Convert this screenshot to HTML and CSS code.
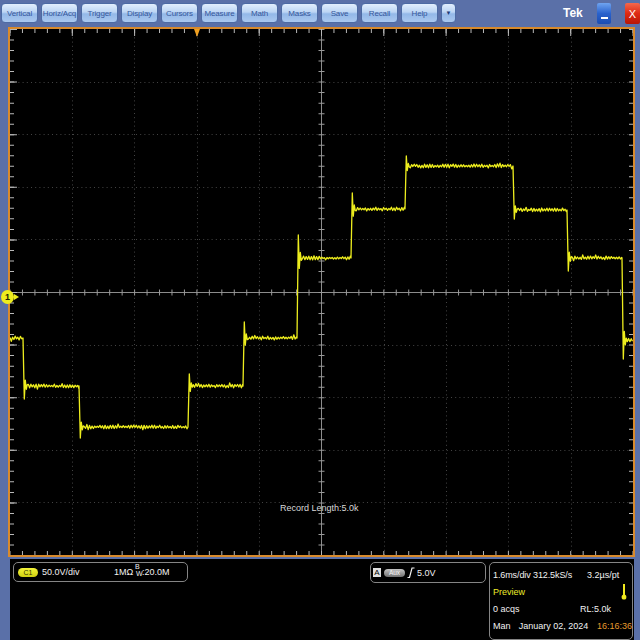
FILE: index.html
```html
<!DOCTYPE html>
<html>
<head>
<meta charset="utf-8">
<title>Tek Scope</title>
<link rel="stylesheet" href="styles.css">
</head>
<body>
<div class="menubar">
  <div class="mb">Vertical</div>
  <div class="mb">Horiz/Acq</div>
  <div class="mb">Trigger</div>
  <div class="mb">Display</div>
  <div class="mb">Cursors</div>
  <div class="mb">Measure</div>
  <div class="mb">Math</div>
  <div class="mb">Masks</div>
  <div class="mb">Save</div>
  <div class="mb">Recall</div>
  <div class="mb">Help</div>
  <div class="mb mb-arrow">&#9660;</div>
  <span class="tek">Tek</span>
  <span class="winbtn win-min"><span class="min-bar"></span></span>
  <span class="winbtn win-close">X</span>
</div>

<div class="screen">
  <svg class="grat" width="623" height="526" viewBox="10 29 623 526" xmlns="http://www.w3.org/2000/svg">
    <g class="dots" stroke="#444444" stroke-width="1" stroke-dasharray="1 3.2">
      <line x1="72.5" y1="29" x2="72.5" y2="555"/>
      <line x1="134.5" y1="29" x2="134.5" y2="555"/>
      <line x1="197.5" y1="29" x2="197.5" y2="555"/>
      <line x1="259.5" y1="29" x2="259.5" y2="555"/>
      <line x1="384.5" y1="29" x2="384.5" y2="555"/>
      <line x1="446.5" y1="29" x2="446.5" y2="555"/>
      <line x1="508.5" y1="29" x2="508.5" y2="555"/>
      <line x1="571.5" y1="29" x2="571.5" y2="555"/>
      <line x1="10" y1="82.5" x2="633" y2="82.5"/>
      <line x1="10" y1="134.5" x2="633" y2="134.5"/>
      <line x1="10" y1="187.5" x2="633" y2="187.5"/>
      <line x1="10" y1="239.5" x2="633" y2="239.5"/>
      <line x1="10" y1="345.5" x2="633" y2="345.5"/>
      <line x1="10" y1="397.5" x2="633" y2="397.5"/>
      <line x1="10" y1="450.5" x2="633" y2="450.5"/>
      <line x1="10" y1="502.5" x2="633" y2="502.5"/>
    </g>
    <g stroke="#8c8c8c" stroke-width="1">
      <line x1="321.5" y1="29" x2="321.5" y2="555"/>
      <line x1="10" y1="292.5" x2="633" y2="292.5"/>
    </g>
    <g stroke="#9a9a9a">
      <line x1="9.5" y1="292.5" x2="633" y2="292.5" stroke-width="6" stroke-dasharray="1 11.46"/>
      <line x1="321.5" y1="29" x2="321.5" y2="555" stroke-width="6" stroke-dasharray="1 9.52"/>
    </g>
    <g stroke="#b8b8b8">
      <line x1="9.5" y1="29" x2="633" y2="29" stroke-width="8" stroke-dasharray="1 11.46"/>
      <line x1="9.5" y1="555" x2="633" y2="555" stroke-width="8" stroke-dasharray="1 11.46"/>
      <line x1="10" y1="29" x2="10" y2="555" stroke-width="8" stroke-dasharray="1 9.52"/>
      <line x1="633" y1="29" x2="633" y2="555" stroke-width="8" stroke-dasharray="1 9.52"/>
      <line x1="9.5" y1="29" x2="633" y2="29" stroke-width="14" stroke-dasharray="1 61.3"/>
      <line x1="10" y1="29" x2="10" y2="555" stroke-width="14" stroke-dasharray="1 51.6"/>
    </g>
    <path id="trace" d="" fill="none" stroke="#eded1e" stroke-width="1.3" stroke-linejoin="round"/>
  </svg>
  <div class="trig-marker"></div>
  <div class="ch-marker"><span class="ch-dot">1</span><span class="ch-arrow"></span></div>
  <div class="reclen">Record Length:5.0k</div>
</div>

<div class="status">
  <div class="box chbox">
    <span class="c1badge">C1</span>
    <span class="vdiv">50.0V/div</span>
    <span class="imp">1M&Omega;</span>
    <span class="bw"><span class="bw-b">B</span><span class="bw-w">W</span>:20.0M</span>
  </div>
  <div class="box trigbox">
    <span class="trig-a">A</span>
    <span class="aux">Aux</span>
    <svg class="edge" width="8" height="11" viewBox="0 0 8 11"><path d="M0.5 10.5 H2.5 L5 1 H7.5" fill="none" stroke="#f0f0f0" stroke-width="1.2"/></svg>
    <span class="tlevel">5.0V</span>
  </div>
  <div class="box tbbox">
    <div class="row"><span class="c-a">1.6ms/div</span><span class="c-b">312.5kS/s</span><span class="c-c">3.2&micro;s/pt</span></div>
    <div class="row"><span class="preview">Preview</span>
      <svg class="ind" width="6" height="16" viewBox="0 0 6 16"><rect x="2" y="0" width="2" height="12" fill="#f0e81e"/><ellipse cx="3" cy="13" rx="2.4" ry="2.6" fill="#f0e81e"/></svg>
    </div>
    <div class="row"><span class="c-acq">0 acqs</span><span class="c-rl">RL:5.0k</span></div>
    <div class="row"><span class="c-man">Man</span><span class="c-date">January 02, 2024</span><span class="c-time">16:16:36</span></div>
  </div>
</div>
<script src="script.js"></script>
</body>
</html>
```

FILE: styles.css
```css
* { box-sizing: border-box; margin: 0; padding: 0; }
html, body { width: 640px; height: 640px; overflow: hidden; }
body {
  background: #5a70a8;
  font-family: "Liberation Sans", Arial, sans-serif;
  color: #f2f2f2;
}

/* top menu */
.menubar {
  display: flex;
  align-items: flex-start;
  height: 27px;
  padding: 3px 0 0 1px;
}
.mb {
  width: 37px;
  height: 20px;
  margin-right: 3px;
  border-radius: 4px;
  border: 1px solid #4d6ba4;
  background: linear-gradient(#e2eefd 0%, #bcd5f4 45%, #93b8e8 55%, #aac8ef 100%);
  color: #35569a;
  font-size: 8px;
  letter-spacing: -0.15px;
  display: flex;
  align-items: center;
  justify-content: center;
  white-space: nowrap;
}
.mb-arrow { width: 15px; font-size: 6px; color: #1e3a78; letter-spacing: 0; }
.tek {
  margin-left: auto;
  width: 20px;
  margin-right: 14px;
  margin-top: 3px;
  font-size: 12px;
  font-weight: bold;
  color: #ffffff;
}
.winbtn {
  height: 21px;
  border-radius: 2px;
  display: flex;
  align-items: center;
  justify-content: center;
}
.win-min {
  width: 14px;
  margin-right: 14px;
  background: linear-gradient(#6fa4f0, #2a62cc 50%, #1a4cb2);
  align-items: flex-end;
  padding-bottom: 5px;
}
.min-bar { width: 7px; height: 2px; background: #ffffff; }
.win-close {
  width: 15px;
  background: linear-gradient(#f4684c, #de2a14 50%, #b81606);
  color: #ffffff;
  font-size: 11px;
}

/* graticule */
.screen {
  position: relative;
  margin-left: 8px;
  width: 627px;
  height: 530px;
  border: 2px solid #d88a2c;
  background: #000000;
}
.grat { display: block; }
.trig-marker {
  position: absolute;
  left: 184px;
  top: 0;
  width: 0;
  height: 0;
  border-left: 3.5px solid transparent;
  border-right: 3.5px solid transparent;
  border-top: 8px solid #f0a020;
}
.ch-marker {
  position: absolute;
  left: -9px;
  top: 261px;
  display: flex;
  align-items: center;
}
.ch-dot {
  width: 13px;
  height: 14px;
  border-radius: 50%;
  background: #ecec1e;
  color: #202000;
  font-size: 9px;
  font-weight: bold;
  display: flex;
  align-items: center;
  justify-content: center;
}
.ch-arrow {
  width: 0;
  height: 0;
  border-top: 3px solid transparent;
  border-bottom: 3px solid transparent;
  border-left: 5px solid #ecec1e;
}
.reclen {
  position: absolute;
  left: 270px;
  top: 474px;
  font-size: 9px;
  line-height: 11px;
  color: #d8d8d8;
}

/* bottom status */
.status {
  display: flex;
  align-items: flex-start;
  margin: 2px 0 0 10px;
  width: 624px;
  height: 81px;
  background: #000000;
  padding-top: 3px;
  font-size: 9px;
}
.box {
  border: 1px solid #858585;
  border-radius: 5px;
}
.chbox {
  margin-left: 3px;
  width: 175px;
  height: 20px;
  display: flex;
  align-items: center;
  padding-left: 4px;
}
.c1badge {
  width: 20px;
  height: 9px;
  border-radius: 5px;
  background: linear-gradient(#f4f43a, #cfcf10);
  color: #333300;
  font-size: 7px;
  display: flex;
  align-items: center;
  justify-content: center;
}
.vdiv { margin-left: 4px; width: 72px; }
.imp { width: 21px; }
.bw { position: relative; padding-left: 7px; }
.bw-b { position: absolute; left: 0; top: -4px; font-size: 7px; }
.bw-w { position: absolute; left: 1px; top: 3px; font-size: 7px; }

.trigbox {
  margin-left: 182px;
  width: 116px;
  height: 21px;
  display: flex;
  align-items: center;
  padding-left: 2px;
}
.trig-a {
  width: 8px;
  height: 9px;
  background: #e0e0e0;
  color: #000000;
  font-size: 8px;
  line-height: 9px;
  text-align: center;
}
.aux {
  margin-left: 3px;
  width: 21px;
  height: 8px;
  border-radius: 4px;
  background: linear-gradient(#c4c4c4, #707070);
  color: #f4f4f4;
  font-size: 6.5px;
  display: flex;
  align-items: center;
  justify-content: center;
}
.edge { margin-left: 2px; }
.tlevel { margin-left: 2px; }

.tbbox {
  margin-left: 3px;
  width: 144px;
  height: 78px;
  padding: 3px 0 0 3px;
}
.row {
  display: flex;
  align-items: center;
  height: 17px;
}
.c-a { width: 40px; letter-spacing: -0.1px; }
.c-b { width: 54px; letter-spacing: -0.1px; }
.preview { color: #eded2a; width: 128px; }
.ind { margin-top: 1px; }
.c-acq { width: 87px; }
.c-man { width: 26px; }
.c-date { width: 79px; }
.c-time { color: #e69a2e; }
```

FILE: script.js
```js
(function () {
  var tr = [
    [23, 386, 399], [79, 427, 438], [188, 386, 374], [243, 338, 322],
    [297, 258, 235], [351, 209, 193], [405, 166, 156], [513, 210, 219],
    [567, 258, 271], [622, 340, 359]
  ];
  var seed = 12345;
  function rnd() { seed = (seed * 16807) % 2147483647; return seed / 2147483647; }
  var p = [], lvl = 338, x = 10, i = 0, k = 0;
  while (x <= 633) {
    if (i < tr.length && x >= tr[i][0]) {
      var t = tr[i], a = t[1], o = t[2], d = o - a;
      p.push(t[0] + ' ' + lvl.toFixed(1));
      p.push((t[0] + 1.3).toFixed(1) + ' ' + o);
      p.push((t[0] + 2.3).toFixed(1) + ' ' + (a - d * 0.45).toFixed(1));
      p.push((t[0] + 3.3).toFixed(1) + ' ' + (a + d * 0.25).toFixed(1));
      p.push((t[0] + 4.3).toFixed(1) + ' ' + (a - d * 0.1).toFixed(1));
      lvl = a; x = t[0] + 5.3; i++; continue;
    }
    var n = (k % 2 ? 1 : -1) * (0.4 + rnd() * 1.5);
    if (rnd() < 0.08) n *= 1.8;
    p.push(x.toFixed(1) + ' ' + (lvl + n).toFixed(1));
    x += 1.3; k++;
  }
  document.getElementById('trace').setAttribute('d', 'M' + p.join(' L'));
})();
```
